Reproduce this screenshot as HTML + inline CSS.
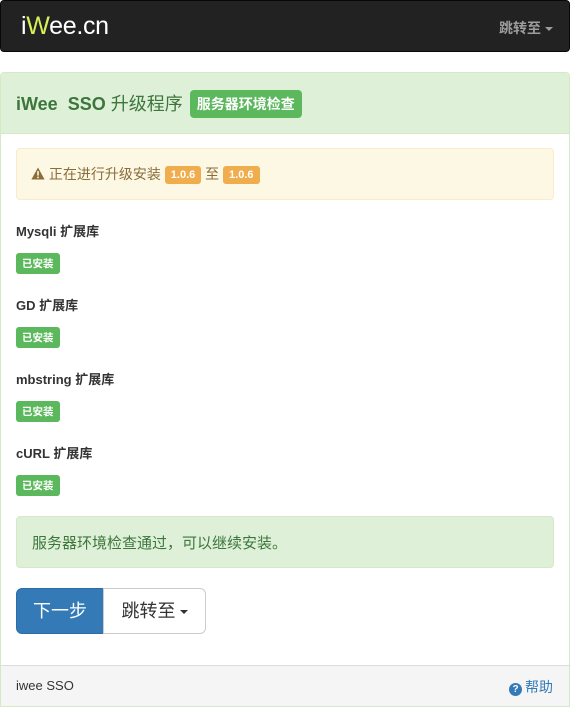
<!DOCTYPE html>
<html><head><meta charset="utf-8"><style>
*{box-sizing:border-box;margin:0;padding:0}
body{width:570px;height:707px;background:#fff;font-family:"Liberation Sans","Noto Sans CJK SC",sans-serif;font-size:14px;color:#333;position:relative;overflow:hidden}
.nav{position:absolute;left:0;top:0;width:570px;height:52px;background:#222;border:1px solid #080808;border-radius:4px}
.logo{position:absolute;left:20px;top:11px;font-size:25px;color:#fff;letter-spacing:-0.3px}
.logo b{font-weight:normal;color:#d9f05a}
.navr{position:absolute;right:16px;top:17px;color:#9d9d9d;font-size:14px;font-weight:bold}
.caret{display:inline-block;width:0;height:0;border-left:4px solid transparent;border-right:4px solid transparent;border-top:4px solid currentColor;vertical-align:middle;margin-left:4px}
.panel{position:absolute;left:0;top:72px;width:570px;height:635px;border:1px solid #d6e9c6;border-radius:4px;overflow:hidden}
.ph{height:61px;background:#dff0d8;border-bottom:1px solid #d6e9c6;padding:17px 15px;color:#3c763d;font-size:18px;font-weight:bold}
.ph span.t{font-weight:normal}
.lbl{display:inline-block;background:#5cb85c;color:#fff;font-weight:bold;border-radius:4px}
.ph .lbl{font-size:14px;padding:4px 7px;vertical-align:1px;margin-left:2px}
.warn{position:absolute;left:16px;top:148px;width:538px;height:52px;background:#fcf8e3;border:1px solid #faebcc;border-radius:4px;color:#8a6d3b;padding:15px 14px;font-size:14px}
.ol{display:inline-block;background:#f0ad4e;color:#fff;font-size:11px;font-weight:bold;padding:3px 6px;border-radius:3px;vertical-align:1px}
.item{position:absolute;left:16px;font-weight:bold;font-size:13px;color:#333}
.ok{position:absolute;left:16px;font-size:10.5px;padding:3px 6px;border-radius:3px}
.succ{position:absolute;left:16px;top:516px;width:538px;height:52px;background:#dff0d8;border:1px solid #d6e9c6;border-radius:4px;color:#3c763d;padding:15px 15px;font-size:15px}
.b1{position:absolute;left:16px;top:588px;width:88px;height:46px;background:#337ab7;border:1px solid #2e6da4;border-radius:6px 0 0 6px;color:#fff;font-size:18px;text-align:center;line-height:44px}
.b2{position:absolute;left:103px;top:588px;width:103px;height:46px;background:#fff;border:1px solid #ccc;border-radius:0 6px 6px 0;color:#333;font-size:18px;text-align:center;line-height:44px}
.foot{position:absolute;left:0;top:665px;width:570px;height:42px;background:#f5f5f5;border:1px solid #d6e9c6;border-top-color:#ddd;padding:12px 15px;font-size:13px}
.help{position:absolute;right:16px;top:11px;color:#337ab7;font-size:14px}
.q{display:inline-block;width:13px;height:13px;border-radius:50%;background:#337ab7;color:#fff;font-size:10px;font-weight:bold;text-align:center;line-height:13px;vertical-align:0px;margin-right:3px}
</style></head><body>
<div class="nav"><div class="logo">i<b>W</b>ee.cn</div><div class="navr">跳转至<span class="caret"></span></div></div>
<div class="panel"><div class="ph">iWee&nbsp; SSO <span class="t">升级程序</span> <span class="lbl">服务器环境检查</span></div></div>
<div class="warn"><svg width="14" height="13" viewBox="0 0 14 13" style="vertical-align:-1px"><path d="M7 0.5L13.6 12.5H0.4Z" fill="#8a6d3b"/><rect x="6.2" y="4" width="1.6" height="4.6" fill="#fcf8e3"/><rect x="6.2" y="9.6" width="1.6" height="1.6" fill="#fcf8e3"/></svg> 正在进行升级安装 <span class="ol">1.0.6</span> 至 <span class="ol">1.0.6</span></div>
<div class="item" style="top:221px">Mysqli 扩展库</div><span class="lbl ok" style="top:253px">已安装</span>
<div class="item" style="top:295px">GD 扩展库</div><span class="lbl ok" style="top:327px">已安装</span>
<div class="item" style="top:369px">mbstring 扩展库</div><span class="lbl ok" style="top:401px">已安装</span>
<div class="item" style="top:443px">cURL 扩展库</div><span class="lbl ok" style="top:475px">已安装</span>
<div class="succ">服务器环境检查通过，可以继续安装。</div>
<div class="b1">下一步</div><div class="b2">跳转至<span class="caret"></span></div>
<div class="foot">iwee SSO<span class="help"><span class="q">?</span>帮助</span></div>
</body></html>
